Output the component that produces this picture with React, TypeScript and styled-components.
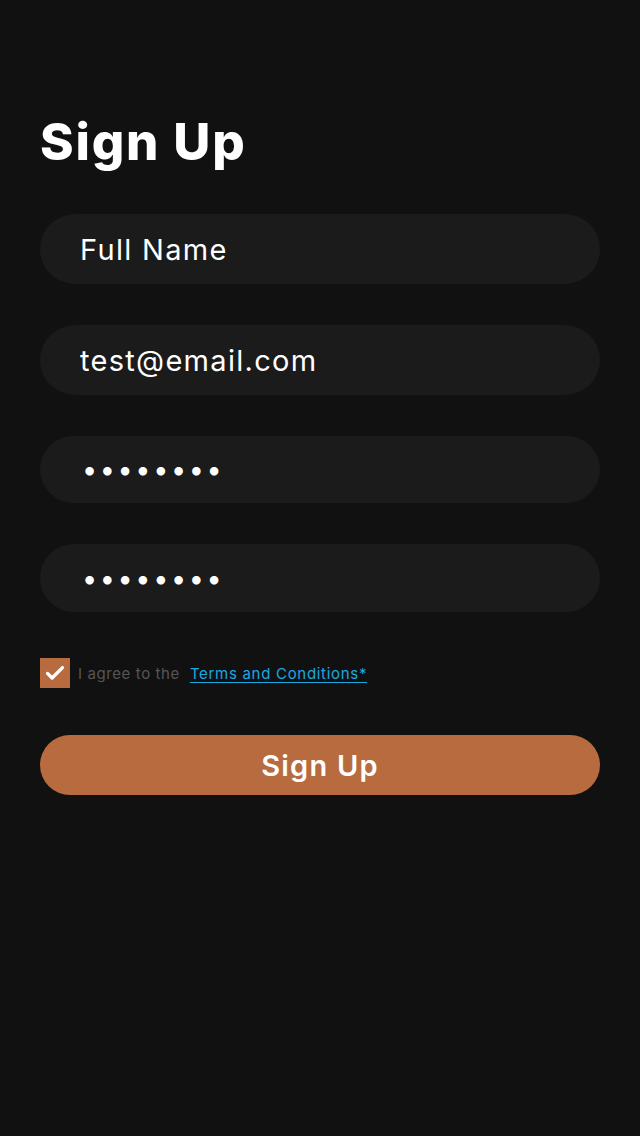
import React from 'react';
import styled, { createGlobalStyle } from 'styled-components';

const GlobalStyle = createGlobalStyle`
  body {
    margin: 0;
    background: #111111;
    font-family: Inter, 'Noto Sans', sans-serif;
  }
`;

const Page = styled.main`
  min-height: 1136px;
  box-sizing: border-box;
  padding: 110px 40px 0;
  display: flex;
  flex-direction: column;
`;

const Title = styled.h1`
  margin: 0;
  font-size: 51px;
  line-height: 64px;
  font-weight: 800;
  color: #ffffff;
  letter-spacing: 1.8px;
`;

const Form = styled.form`
  margin-top: 40px;
  display: flex;
  flex-direction: column;
  gap: 41px;
`;

const Field = styled.input<{ $h: number }>`
  box-sizing: border-box;
  width: 100%;
  height: ${p => p.$h}px;
  border: none;
  outline: none;
  border-radius: 36px;
  background: #1b1b1b;
  padding: 0 40px;
  font-family: Inter, 'Noto Sans', sans-serif;
  font-size: 29px;
  font-weight: 400;
  color: #ffffff;
  letter-spacing: 1.3px;

  &::placeholder {
    color: #ffffff;
    opacity: 1;
  }
`;

const PasswordField = styled(Field)`
  font-size: 27px;
  letter-spacing: 2.6px;
  padding-left: 42px;
`;

const AgreeRow = styled.label`
  margin-top: 5px;
  display: flex;
  align-items: center;
  gap: 8px;
  font-size: 15px;
  letter-spacing: 0.6px;
  color: #555555;
`;

const CheckBox = styled.span`
  width: 30px;
  height: 30px;
  background: #b86b3f;
  display: flex;
  align-items: center;
  justify-content: center;
  flex-shrink: 0;
`;

const TermsLink = styled.a`
  margin-left: 2px;
  color: #1aa8e2;
  font-size: 15px;
  letter-spacing: 0.7px;
  text-decoration: underline;
  text-underline-offset: 3px;
`;

const SubmitButton = styled.button`
  margin-top: 6px;
  height: 60px;
  border: none;
  border-radius: 30px;
  background: #b76b3f;
  color: #ffffff;
  font-family: Inter, 'Noto Sans', sans-serif;
  font-size: 29px;
  font-weight: 600;
  letter-spacing: 1.2px;
  cursor: pointer;
`;

export default function App() {
  return (
    <>
      <GlobalStyle />
      <Page>
        <Title>Sign Up</Title>
        <Form onSubmit={e => e.preventDefault()}>
          <Field $h={70} type="text" placeholder="Full Name" />
          <Field $h={70} type="email" defaultValue="test@email.com" />
          <PasswordField $h={67} type="password" defaultValue="12345678" />
          <PasswordField $h={68} type="password" defaultValue="12345678" />
          <AgreeRow>
            <CheckBox>
              <svg width="20" height="20" viewBox="0 0 24 24" fill="none" stroke="#fff" strokeWidth="4" strokeLinecap="round" strokeLinejoin="round">
                <path d="M3 12.5l5.5 5.5L21 5.5" />
              </svg>
            </CheckBox>
            I agree to the
            <TermsLink href="#">Terms and Conditions*</TermsLink>
          </AgreeRow>
          <SubmitButton type="submit">Sign Up</SubmitButton>
        </Form>
      </Page>
    </>
  );
}
